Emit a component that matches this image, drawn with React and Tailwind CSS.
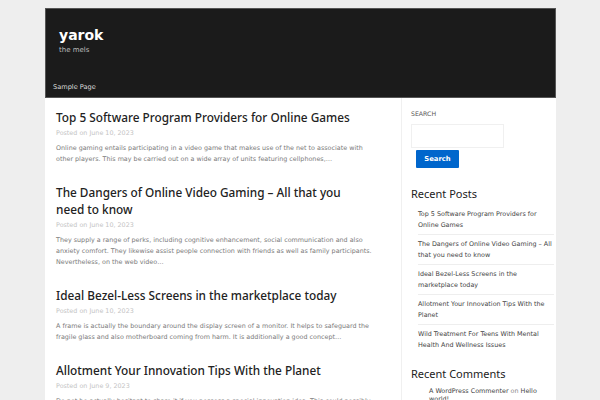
const POSTS = [
  {
    title: 'Top 5 Software Program Providers for Online Games',
    date: 'June 10, 2023',
    excerpt:
      'Online gaming entails participating in a video game that makes use of the net to associate with other players. This may be carried out on a wide array of units featuring cellphones,…',
  },
  {
    title: 'The Dangers of Online Video Gaming – All that you need to know',
    date: 'June 10, 2023',
    excerpt:
      'They supply a range of perks, including cognitive enhancement, social communication and also anxiety comfort. They likewise assist people connection with friends as well as family participants. Nevertheless, on the web video…',
  },
  {
    title: 'Ideal Bezel-Less Screens in the marketplace today',
    date: 'June 10, 2023',
    excerpt:
      'A frame is actually the boundary around the display screen of a monitor. It helps to safeguard the fragile glass and also motherboard coming from harm. It is additionally a good concept…',
  },
  {
    title: 'Allotment Your Innovation Tips With the Planet',
    date: 'June 9, 2023',
    excerpt:
      'Do not be actually hesitant to share it if you possess a special innovation idea. This could possibly be actually the beginning of something great…',
  },
];

const RECENT = [
  'Top 5 Software Program Providers for Online Games',
  'The Dangers of Online Video Gaming – All that you need to know',
  'Ideal Bezel-Less Screens in the marketplace today',
  'Allotment Your Innovation Tips With the Planet',
  'Wild Treatment For Teens With Mental Health And Wellness Issues',
];

export default function App() {
  return (
    <div className="h-[400px] overflow-hidden bg-[#eeeeee] pt-[8px] font-['DejaVu_Sans',sans-serif]">
      <div className="w-[511px] ml-[45px] bg-white">
        {/* header */}
        <header className="h-[90px] bg-[#1b1b1b] border border-[#555] flex flex-col">
          <div className="pl-[13px] pt-[17px]">
            <h1 className="text-[14px] leading-[18px] font-bold text-white">yarok</h1>
            <p className="text-[7px] leading-[10px] text-[#bbbbbb] mt-[1px]">the mels</p>
          </div>
          <nav className="mt-auto pl-[7px] pb-[1px]">
            <a className="text-[6.6px] text-[#dddddd]">Sample Page</a>
          </nav>
        </header>

        <div className="flex">
          {/* posts */}
          <main className="w-[356px] pl-[11px] pr-[28px] pt-[11px]">
            {POSTS.map((p) => (
              <article key={p.title} className="mb-[19px]">
                <h2 className="pr-[14px] text-[11.8px] leading-[17px] font-medium text-[#222222] font-['Noto_Sans',sans-serif]">
                  {p.title}
                </h2>
                <p className="text-[6.4px] leading-[11px] text-[#c4c4c4] mt-[2px]">Posted on {p.date}</p>
                <p className="text-[6.4px] leading-[11px] text-[#7a7a7a] mt-[4px]">{p.excerpt}</p>
              </article>
            ))}
          </main>

          {/* sidebar */}
          <aside className="w-[155px] border-l border-[#f0f0f0] pl-[9px] pr-[2px] pt-[11px]">
            <h3 className="text-[6.2px] leading-[10px] text-[#555555] uppercase">Search</h3>
            <div className="mt-[5px] w-[93px] h-[24px] border border-[#f0f0f0]"></div>
            <button className="block ml-[5px] mt-[2px] h-[18px] w-[43px] bg-[#0066cc] text-white text-[6.8px] font-bold rounded-[1px]">
              Search
            </button>
            <h3 className="mt-[19px] text-[11px] leading-[14px] text-[#222222] font-['Noto_Sans',sans-serif]">Recent Posts</h3>
            <ul className="mt-[8px] pl-[7px]">
              {RECENT.map((r, i) => (
                <li
                  key={r}
                  className={`text-[6.4px] leading-[10.5px] text-[#444444] pb-[4px] mb-[4px] ${i < RECENT.length - 1 ? 'border-b border-[#eeeeee]' : ''}`}
                >
                  {r}
                </li>
              ))}
            </ul>
            <h3 className="mt-[13px] text-[11px] leading-[14px] text-[#222222] font-['Noto_Sans',sans-serif]">Recent Comments</h3>
            <p className="mt-[6px] pl-[18px] pr-[6px] text-[6.4px] leading-[8px] text-[#444444]">
              A WordPress Commenter <span className="text-[#888888]">on</span> Hello world!
            </p>
          </aside>
        </div>
      </div>
    </div>
  );
}
